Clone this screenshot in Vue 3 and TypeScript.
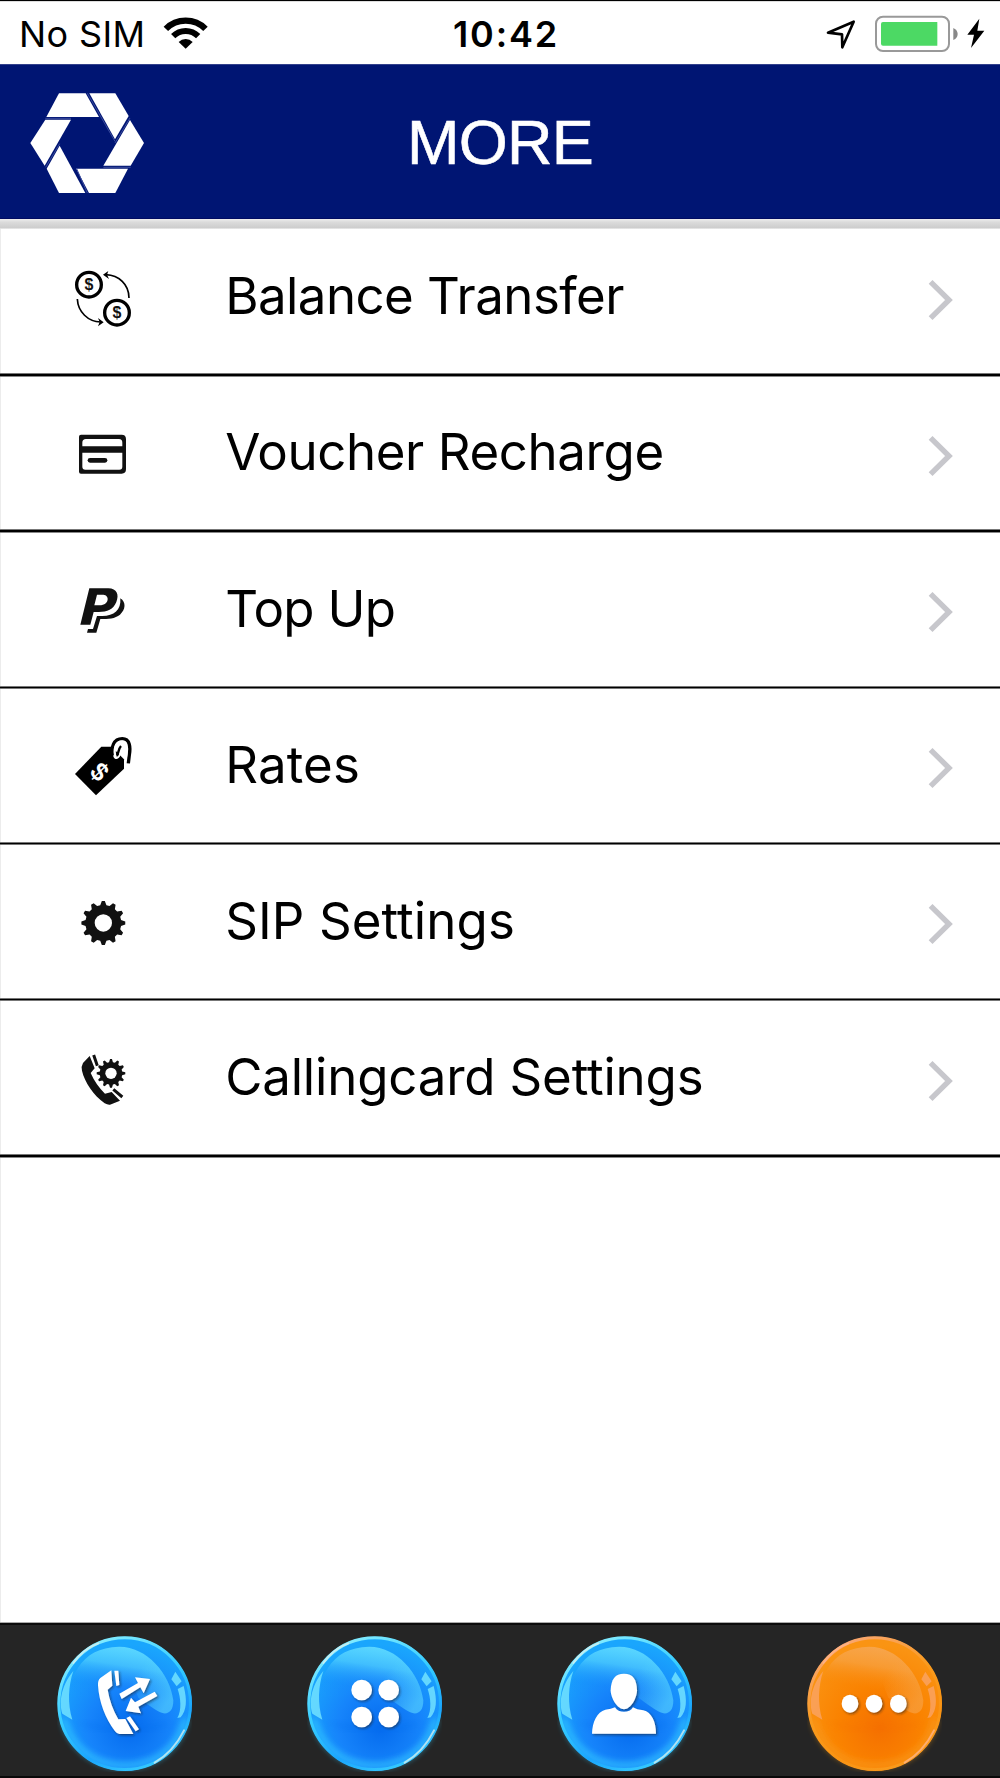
<script setup lang="ts">
interface MenuItem {
  id: string
  label: string
  spacing: number
  view: string
  thick: boolean
}

const items: MenuItem[] = [
  { id: 'transfer', label: 'Balance Transfer', spacing: -0.55, view: '90 75 200 200', thick: true },
  { id: 'voucher', label: 'Voucher Recharge', spacing: -0.4, view: '90 543 200 200', thick: true },
  { id: 'topup', label: 'Top Up', spacing: -0.7, view: '90 51 200 200', thick: false },
  { id: 'rates', label: 'Rates', spacing: 0.15, view: '90 519 200 200', thick: false },
  { id: 'sip', label: 'SIP Settings', spacing: 0.1, view: '90 87 200 200', thick: false },
  { id: 'card', label: 'Callingcard Settings', spacing: -0.18, view: '90 558 200 200', thick: true },
]

interface Tab {
  id: string
  name: string
  active: boolean
}

const tabs: Tab[] = [
  { id: 'calls', name: 'Calls', active: false },
  { id: 'keypad', name: 'Keypad', active: false },
  { id: 'contacts', name: 'Contacts', active: false },
  { id: 'more', name: 'More', active: true },
]

const blue = { rim: '#8cf0ff', edge: '#1aa6fd', mid: '#1684fb', deep: '#056bee', gloss: '#5cd8ff', shine: '#7eecff', low: '#36ccff' }
const orange = { rim: '#f9a87c', edge: '#fa9413', mid: '#fa8200', deep: '#f57000', gloss: '#f7a54c', shine: '#f9a56c', low: '#f99a1c' }
const tone = (t: Tab) => (t.active ? orange : blue)

// Outline of a cog with evenly spaced trapezoid teeth
function gear(cx: number, cy: number, outer: number, root: number, teeth: number): string {
  const pts: string[] = []
  const step = (Math.PI * 2) / teeth
  for (let i = 0; i < teeth; i++) {
    const a = i * step
    for (const [off, r] of [[-0.33, root], [-0.13, outer], [0.13, outer], [0.33, root]]) {
      const t = a + off * step
      pts.push(`${(cx + r * Math.cos(t)).toFixed(1)},${(cy + r * Math.sin(t)).toFixed(1)}`)
    }
  }
  return pts.join(' ')
}
const bigGear = gear(190, 189, 66, 54, 12)
const smallGear = gear(213, 640, 43, 34, 12)
</script>

<template>
  <div class="screen">
    <div class="status">
      <div class="carrier">
        <span class="sim">No SIM</span>
        <svg class="wifi" viewBox="490 48 138 102" fill="none" stroke="#000">
          <path d="M498.6 86.6A84 84 0 0 1 617.4 86.6" stroke-width="19" />
          <path d="M520.5 108.5A53 53 0 0 1 595.5 108.5" stroke-width="18" />
          <path d="M558 146L537 126A29 29 0 0 1 579 126Z" fill="#000" stroke="none" />
        </svg>
      </div>
      <span class="clock">10:42</span>
      <svg class="power" viewBox="135 42 480 120">
        <path d="M144 98L221 65L187 142L186 103Z" fill="none" stroke="#000" stroke-width="8" stroke-linejoin="round" />
        <rect x="288" y="50" width="219" height="103" rx="21" fill="#fff" stroke="#999" stroke-width="6" />
        <path d="M309 66H472V137H309Q303 137 303 131V72Q303 66 309 66Z" fill="#4cd964" />
        <path d="M520 84Q533 90 533 102T520 120Z" fill="#888" />
        <path d="M598 56L562 104H582L573 144L613 92H592Z" fill="#000" />
      </svg>
    </div>

    <header class="header">
      <svg class="logo" viewBox="88 275 350 305" fill="#fff">
        <path d="M178 279H258L298 350H140Z" />
        <path d="M269 279H347L387 347L346 417Z" />
        <path d="M391 359L433 428L393 496H311Z" />
        <path d="M230 505H385L347 578H268Z" />
        <path d="M180 436L257 578H178L141 505Z" />
        <path d="M137 358H214L135 496L92 428Z" />
        <path d="M263 279L346 423M391 353L346 428M393 501H311M230 503L263 578M180 430L138 501M137 354H214" fill="none" stroke="#3a4b9d" stroke-width="3" />
      </svg>
      <h1 class="title">MORE</h1>
    </header>
    <div class="strip"></div>

    <main class="list">
      <div v-for="item in items" :key="item.id" class="row" :class="{ thick: item.thick, [item.id]: true }">
        <svg class="icon" :viewBox="item.view" fill="#111">
          <g v-if="item.id === 'transfer'">
            <circle cx="147" cy="134" r="37" fill="#fff" stroke="#000" stroke-width="10" />
            <circle cx="231" cy="218" r="37" fill="#fff" stroke="#000" stroke-width="10" />
            <text transform="translate(147 151) scale(0.92 1)" class="coin">$</text>
            <text transform="translate(231 235) scale(0.92 1)" class="coin">$</text>
            <path d="M267 174C267 132 236 106 198 104M112 177C114 216 144 245 182 246" fill="none" stroke="#000" stroke-width="5" />
            <path d="M189 104L205 93L201 104L207 117ZM191 247L174 234L179 246L174 259Z" fill="#000" />
          </g>
          <g v-else-if="item.id === 'voucher'">
            <path fill-rule="evenodd" d="M123 584H245Q258 584 258 597V688Q258 701 245 701H123Q117 701 117 695V590Q117 584 123 584ZM138 597Q127 597 127 608V619H247V608Q247 597 237 597ZM127 638V680Q127 689 136 689H238Q247 689 247 680V638Z" />
            <rect x="143" y="654" width="59" height="14" rx="7" />
          </g>
          <g v-else-if="item.id === 'topup'">
            <path fill-rule="evenodd" d="M148 85H205C231 85 238 105 229 126C220 148 202 156 176 156H161L151 194H121ZM171 104L163 136H178C194 136 203 128 203 117C203 108 196 104 187 104Z" />
            <path d="M241 115C259 126 257 149 240 164C225 176 205 177 181 177L169 218H141L144 207H159L171 168H187C222 168 244 151 241 115Z" />
          </g>
          <g v-else-if="item.id === 'rates'">
            <path d="M105 642L184 560H215L252 598V626L168 706Z" fill="#000" />
            <path d="M220 590C211 562 221 536 247 536C270 536 272 562 268 585L265 610" fill="none" stroke="#000" stroke-width="10" />
            <path d="M228 594C218 566 229 545 246 545C263 546 262 572 256 600" fill="none" stroke="#fff" stroke-width="7" />
            <path d="M222 586C226 601 241 596 243 564" fill="none" stroke="#fff" stroke-width="6" />
            <path d="M231 586C236 580 235 566 243 558" fill="none" stroke="#000" stroke-width="7" />
            <text transform="translate(179 635) rotate(45) scale(0.95 1)" x="0" y="27" class="tag">$</text>
          </g>
          <g v-else-if="item.id === 'sip'">
            <polygon :points="bigGear" />
            <circle cx="190" cy="189" r="26" fill="#fff" />
          </g>
          <g v-else>
            <path d="M149 588L164 625L152 639C162 663 178 685 195 701L215 696L240 722L210 734Q203 735 194 730C160 705 134 667 126 632Q123 619 129 609Z" />
            <path d="M161 585L172 617M220 688L247 711" stroke="#111" stroke-width="9" />
            <polygon :points="smallGear" />
            <circle cx="213" cy="640" r="17" fill="#fff" />
          </g>
        </svg>
        <span class="label" :style="{ letterSpacing: item.spacing + 'px' }">{{ item.label }}</span>
        <svg class="chevron" viewBox="0 0 26 42" fill="none" stroke="#c7c7cc" stroke-width="5.4">
          <path d="M2.6 2.8L21 21L2.6 39.2" />
        </svg>
      </div>
    </main>

    <nav class="tabs">
      <button v-for="tab in tabs" :key="tab.id" class="tab" :aria-label="tab.name">
        <svg class="orb" viewBox="81 74 405 411">
          <defs>
            <radialGradient :id="'body-' + tab.id" cx="0.54" cy="0.68" r="0.62">
              <stop offset="0" :stop-color="tone(tab).deep" />
              <stop offset="0.5" :stop-color="tone(tab).mid" />
              <stop offset="1" :stop-color="tone(tab).edge" />
            </radialGradient>
            <linearGradient :id="'gloss-' + tab.id" x1="0.62" y1="0" x2="0.42" y2="0.8">
              <stop offset="0" :stop-color="tone(tab).gloss" />
              <stop offset="0.35" :stop-color="tone(tab).gloss" stop-opacity="0.6" />
              <stop offset="0.75" :stop-color="tone(tab).mid" stop-opacity="0.15" />
              <stop offset="1" :stop-color="tone(tab).mid" stop-opacity="0" />
            </linearGradient>
            <linearGradient :id="'side-' + tab.id" x1="0" y1="0" x2="1" y2="0.8">
              <stop offset="0.4" :stop-color="tone(tab).gloss" stop-opacity="0" />
              <stop offset="0.95" :stop-color="tone(tab).gloss" stop-opacity="0.6" />
            </linearGradient>
            <linearGradient :id="'rim-' + tab.id" x1="0.2" y1="0" x2="0.7" y2="1">
              <stop offset="0" :stop-color="tone(tab).rim" />
              <stop offset="0.45" :stop-color="tone(tab).low" />
              <stop offset="0.75" :stop-color="tone(tab).edge" />
              <stop offset="1" :stop-color="tone(tab).low" />
            </linearGradient>
            <filter :id="'soft-' + tab.id" x="-20%" y="-20%" width="140%" height="140%">
              <feGaussianBlur stdDeviation="9" />
            </filter>
            <filter :id="'shade-' + tab.id" x="-20%" y="-20%" width="140%" height="140%">
              <feDropShadow dx="4" dy="4" stdDeviation="3" flood-color="#222" flood-opacity="0.55" />
            </filter>
          </defs>
          <circle cx="284" cy="280" r="201" :fill="`url(#body-${tab.id})`" />
          <path d="M101 325C125 410 190 465 284 465C380 465 445 410 466 325" fill="none" :stroke="tone(tab).low" stroke-width="18" opacity="0.7" :filter="`url(#soft-${tab.id})`" />
          <path d="M118 318C106 205 150 111 267 109C350 108 420 190 430 270C430 300 418 311 400 309C370 300 340 260 284 245C230 230 160 240 118 318Z" :fill="`url(#gloss-${tab.id})`" />
          <path d="M267 109C350 108 420 190 430 270C430 300 418 311 400 309C375 300 355 283 325 262Z" :fill="`url(#side-${tab.id})`" />
          <path d="M150 334Q284 372 420 336Q390 362 284 362Q180 360 150 334Z" :fill="tone(tab).deep" opacity="0.45" :filter="`url(#soft-${tab.id})`" />
          <path d="M130 182C90 230 88 280 97 310L127 328C112 280 115 225 130 182Z" :fill="tone(tab).shine" opacity="0.75" />
          <path d="M436 184L455 213L440 228L424 207ZM443 236L461 227C472 270 470 300 452 321L442 323C456 300 452 262 443 236Z" :fill="tone(tab).shine" opacity="0.75" />
          <circle cx="284" cy="280" r="197.5" fill="none" :stroke="`url(#rim-${tab.id})`" stroke-width="9" />
          <path d="M130 158Q160 115 205 99M374 457Q430 424 462 360" fill="none" :stroke="tab.active ? '#ffb48c' : '#dcefed'" stroke-width="6" stroke-linecap="round" opacity="0.75" />
          <g fill="#fff" :filter="`url(#shade-${tab.id})`">
            <g v-if="tab.id === 'calls'">
              <path d="M244 180L247 226L233 238C238 270 250 300 265 327L286 326L310 371H268Q260 370 255 363C226 324 207 275 204 225Q203 210 211 203Z" />
              <path d="M253 181H265L268 224L259 227ZM289 323L300 318L327 357L317 363Z" />
              <path d="M268 250L324 218L315 201L360 206L341 249L331 231L275 266ZM374 244L382 257L325 289L333 309L287 302L303 262L315 276Z" />
            </g>
            <g v-else-if="tab.id === 'keypad'">
              <circle cx="245" cy="239" r="31" />
              <circle cx="326" cy="239" r="31" />
              <circle cx="245" cy="320" r="31" />
              <circle cx="326" cy="320" r="31" />
            </g>
            <g v-else-if="tab.id === 'contacts'">
              <path d="M282 190C309 190 320 207 321 240C321 263 302 297 282 297C262 297 242 263 242 240C243 207 255 190 282 190Z" />
              <path d="M255 291C264 309 300 309 309 291Q320 298 340 300C365 306 378 335 378 370H186C187 335 201 304 226 298Q244 297 255 291Z" />
            </g>
            <g v-else>
              <ellipse cx="210" cy="280" rx="25" ry="27" />
              <ellipse cx="282" cy="280" rx="25" ry="27" />
              <ellipse cx="355" cy="280" rx="25" ry="27" />
            </g>
          </g>
        </svg>
      </button>
    </nav>
  </div>
</template>

<style>
body {
  background: #fff;
}
</style>

<style scoped>
.screen {
  width: 1000px;
  height: 1778px;
  box-sizing: border-box;
  display: flex;
  flex-direction: column;
  background: #fff;
  overflow: hidden;
  font-family: Inter, "Liberation Sans", sans-serif;
  color: #000;
}
.status {
  height: 64px;
  flex: none;
  box-sizing: border-box;
  border-top: 1px solid #000;
  box-shadow: inset 0 1px #ddd;
  display: grid;
  grid-template-columns: 1fr auto 1fr;
  align-items: start;
  font-size: 36px;
  line-height: 44px;
}
.carrier {
  display: flex;
  padding-left: 19px;
}
.sim {
  width: 144px;
  margin-top: 11px;
  letter-spacing: 0.4px;
  white-space: nowrap;
}
.wifi {
  width: 46px;
  height: 34px;
  margin-top: 15px;
}
.clock {
  margin-top: 11px;
  font-weight: 580;
  letter-spacing: 1.8px;
  padding-left: 12px;
}
.power {
  width: 160px;
  height: 40px;
  margin-top: 13px;
  margin-right: 15px;
  justify-self: end;
}
.header {
  height: 155px;
  flex: none;
  background: #001573;
  box-shadow: inset 0 1px #33418c, inset 0 -1px #000b62;
  display: grid;
  grid-template-columns: 1fr auto 1fr;
}
.logo {
  width: 116.67px;
  height: 101.67px;
  margin: 27.67px 0 0 29.33px;
}
.title {
  margin: 42px 0 0;
  font: 400 63px/72px "Liberation Sans", sans-serif;
  letter-spacing: -0.8px;
  -webkit-text-stroke: 0.6px #fff;
  color: #fff;
}
.strip {
  height: 10px;
  flex: none;
  background: linear-gradient(#eee 0, #dcdcdc 30%, #cdcdcd 88%, #f2f2f2 100%);
}
.list {
  flex: 1;
  border-left: 1px solid #ececec;
}
.row {
  height: 156px;
  box-sizing: border-box;
  display: flex;
  align-items: flex-end;
  margin-left: -1px;
  padding: 0 46.5px 0 70px;
  background: linear-gradient(#777 0 1px, #000 1px 2px, #777 2px 3px) bottom / 100% 3px no-repeat;
}
.row.thick {
  background: linear-gradient(#777 0 1px, #000 1px 3px, #888 3px 4px) bottom / 100% 4px no-repeat;
}
.row.transfer {
  height: 148px;
}
.row.card {
  height: 157px;
}
.icon {
  width: 66.67px;
  height: 66.67px;
  margin-bottom: 45.3px;
}
.coin {
  font: 700 52px "Liberation Sans", sans-serif;
  text-anchor: middle;
  fill: #111;
}
.tag {
  font: 700 78px "Liberation Sans", sans-serif;
  text-anchor: middle;
  fill: #fff;
}
.label {
  flex: 1;
  margin-left: 88.5px;
  margin-bottom: 45px;
  font-size: 51px;
  line-height: 72px;
  white-space: nowrap;
}
.rates .label,
.sip .label,
.topup .label {
  margin-bottom: 44px;
}
.chevron {
  width: 26px;
  height: 42px;
  margin-bottom: 55.7px;
}
.tabs {
  height: 156px;
  flex: none;
  box-sizing: border-box;
  border-top: 1px solid #aaa;
  border-bottom: 2px solid #090909;
  background: #252525;
  box-shadow: inset 0 2px #0c0c0c;
  display: grid;
  grid-template-columns: repeat(4, 1fr);
}
.tab {
  border: 0;
  padding: 0;
  background: none;
  display: flex;
  justify-content: center;
  align-items: flex-start;
}
.orb {
  width: 135px;
  height: 137px;
  margin-top: 11.5px;
  margin-right: 1.5px;
}
</style>
